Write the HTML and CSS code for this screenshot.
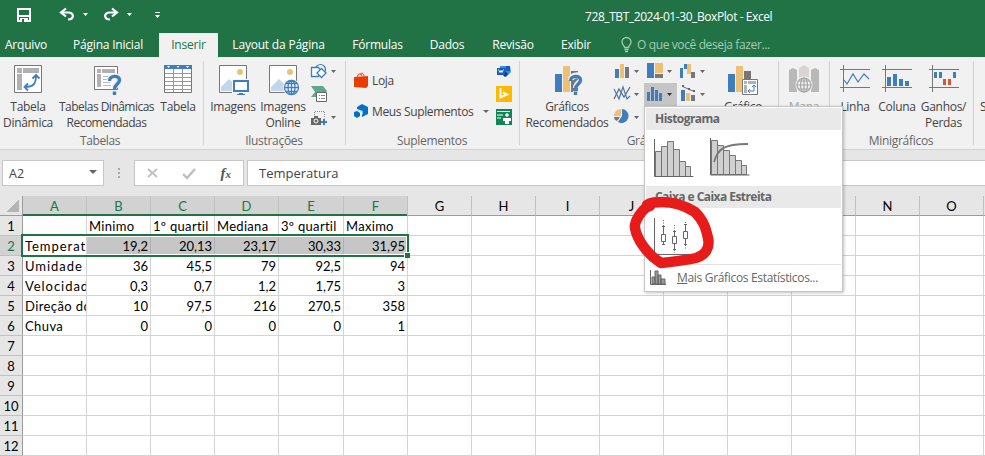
FILE: index.html
```html
<!DOCTYPE html>
<html lang="pt-BR">
<head>
<meta charset="utf-8">
<title>728_TBT_2024-01-30_BoxPlot - Excel</title>
<link rel="stylesheet" href="styles.css">
</head>
<body>
<div class="app">
  <header class="titlebar">
    <div class="quick">
      <svg width="170" height="33" fill="none">
        <path d="M18 9h12v12h-12z" stroke="#fff" stroke-width="2"/><path d="M18 15h12v2h-12zM20 18h8v4h-8z" fill="#fff"/><path d="M22 19h2v3h-2z" fill="#217346"/>
        <path d="M62 12.500h6c7 0 6 7 0 7M66 8.500l-5 4 5 4" stroke="#fff" stroke-width="2.200"/>
        <path d="M83 13h5l-2.500 3zM127 13h5l-2.500 3zM155 15h5l-2.500 3zM155 12h5v1h-5z" fill="#fff"/>
        <path d="M116 12.500h-6c-7 0-6 7 0 7M112 8.500l5 4-5 4" stroke="#fff" stroke-width="2.200"/>
      </svg>
    </div>
    <div class="doc">728_TBT_2024-01-30_BoxPlot - Excel</div>
  </header>
  <nav class="tabs">
    <span class="tab t0">Arquivo</span><span class="tab t1">Página Inicial</span><span class="tab t2 active">Inserir</span><span class="tab t3">Layout da Página</span><span class="tab t4">Fórmulas</span><span class="tab t5">Dados</span><span class="tab t6">Revisão</span><span class="tab t7">Exibir</span>
    <span class="tell"><svg width="12" height="16" fill="none" stroke="#a3cbb3" stroke-width="1.300"><path d="M3.500 10.500c0-2-2.500-2.500-2.500-5.500a4.500 4.500 0 0 1 9 0c0 3-2.500 3.500-2.500 5.500zM3.500 12.500h4M4 14.500h3"/></svg>O que você deseja fazer...</span>
  </nav>

  <section class="ribbon">
    <div class="group g-tables">
      <div class="tools">
        <div class="big w56">
          <svg class="ic" width="28" height="28" fill="none"><path d="M.5.5h27v27h-27z" fill="#fff" stroke="#777"/><path d="M3 3h5v5h-5zM9 3h16v5h-16zM3 9h5v16h-5z" fill="#b1b1b1"/><path d="M11 22c8 0 11-3 11-11M18.500 13.500l3.500-3.500 3.500 3.500M14 18.500l-3.500 3.500 3.500 3.500" stroke="#3f7dbd" stroke-width="1.800"/></svg>
          <span>Tabela<br>Dinâmica</span></div>
        <div class="big w101">
          <svg class="ic" width="26" height="28" fill="none"><path d="M.5 1.500h23v23h-23z" fill="#fff" stroke="#777"/><path d="M3 4h4v4h-4zM8 4h13v4h-13zM3 9h4v13h-4z" fill="#b1b1b1"/><path d="M9 11.500h10M9 14.500h10M9 17.500h7M9 20.500h8" stroke="#bbb"/><path d="M15.500 15c1-5 10-5 10 0 0 4-5 3-5 8" stroke="#f0f0f0" stroke-width="6"/><path d="M15.500 16c0-6 10-6 10-1 0 4-5 4-5 9M20.500 26.500v3.500" stroke="#3f7dbd" stroke-width="3.400"/></svg>
          <span class="tight">Tabelas Dinâmicas<br>Recomendadas</span></div>
        <div class="big w42">
          <svg class="ic" width="28" height="28"><path d="M.5.5h27v27h-27z" fill="#fff" stroke="#777"/><path d="M0 0h28v4h-28z" fill="#3f7dbd"/><path d="M3 1h3l-1.500 2zM12.500 1h3l-1.500 2zM22 1h3l-1.500 2z" fill="#fff"/><path d="M1 8.500h26M1 12.500h26M1 16.500h26M1 20.500h26M1 24.500h26M9.500 4v23M18.500 4v23" stroke="#999"/></svg>
          <span>Tabela</span></div>
      </div>
      <div class="glabel">Tabelas</div>
    </div>

    <div class="group g-illus">
      <div class="tools">
        <div class="big w50 imgs">
          <svg class="ic" width="28" height="28"><path d="M.5.500h27v27h-27z" fill="#fff" stroke="#777"/><circle cx="21" cy="7" r="3" fill="#ecc177"/><path d="M2 26v-4l8-8 7 7v5z" fill="#c3d5ea"/><path d="M13 14h18v14h-18z" fill="#f5f5f5"/><path d="M15 16h14v10h-14z" fill="#fff" stroke="#3f7dbd" stroke-width="2"/><path d="M20 28h4v1h2v1h-8v-1h2z" fill="#3f7dbd"/></svg>
          <span>Imagens</span></div>
        <div class="big w50 imgs">
          <svg class="ic" width="28" height="28" fill="none"><path d="M.5.5h27v27h-27z" fill="#fff" stroke="#777"/><circle cx="21" cy="7" r="3" fill="#ecc177"/><path d="M2 26v-4l8-8 7 7v5z" fill="#c3d5ea"/><circle cx="22.500" cy="22.500" r="8.500" fill="#f5f5f5"/><g stroke="#3f7dbd" stroke-width="1.300"><circle cx="22.500" cy="22.500" r="7" fill="#fff"/><ellipse cx="22.500" cy="22.500" rx="3.500" ry="7"/><path d="M22.500 15v15M15.500 22.500h14M17 18.500h11M17 26.500h11"/></g></svg>
          <span>Imagens<br>Online</span></div>
        <svg class="stack" width="28" height="64" fill="none"><circle cx="9.500" cy="4.500" r="5" stroke="#3f7dbd" stroke-width="1.200"/><path d="M.5 2.500h7l2.500 4-2.500 5h-7z" fill="#fff" stroke="#3f7dbd" stroke-width="1.300"/><path d="M10.500 3.500l4.500 4.500-4.500 4.500-4.500-4.500z" fill="#fff" stroke="#3f7dbd" stroke-width="1.300"/>
          <path d="M0 21h12l4 5-2 2h-9v4h-5l4-5z" fill="#5fa78a"/><path d="M5.500 27.500h10v9h-10z" fill="#fff" stroke="#666"/><path d="M8 30.500h1M8 33.500h1M10 30.500h4M10 33.500h4" stroke="#888"/>
          <path d="M3.500 52v-5.500h10v7" stroke="#888" stroke-dasharray="1 1"/><path d="M0 53h3v-2h4v2h3v7h-10z" fill="#666"/><circle cx="5" cy="56" r="2" stroke="#fff"/><path d="M13 54v6M10 57h6" stroke="#3f7dbd" stroke-width="2"/><path d="M20 5h5l-2.500 3zM20 51h5l-2.500 3z" fill="#666"/></svg>
      </div>
      <div class="glabel">Ilustrações</div>
    </div>

    <div class="group g-addins">
      <div class="tools">
        <div class="addlist">
          <div class="add"><svg width="14" height="16" fill="none"><path d="M0 5l14-1v10l-2 2-12-1z" fill="#eb3c00"/><path d="M3.500 5c0-4 4-4 4.500-1M6 3c1-3 4-2 4 1" stroke="#eb3c00"/></svg><span>Loja</span></div>
          <div class="add"><svg width="14" height="14"><path d="M3 3l5-3 6 3v7l-6 3v-5l-5-2z" fill="#0072c6"/><path d="M3 5.500l5 2v3" fill="none" stroke="#f1f1f1" stroke-width="1.200"/><path d="M0 8l3-1 3 2v3l-3 2-3-2z" fill="#0072c6"/></svg><span class="meus">Meus Suplementos</span><i class="caret"></i></div>
        </div>
        <svg class="apps" width="16" height="64" fill="none"><path d="M4 1h10l1 6-5 5-6-4z" fill="#3293dd"/><path d="M10 1h4v5h-5z" fill="#185abd"/><path d="M5 8l4-2 3 3-3 3z" fill="#16377f"/><path d="M1 3h8v7h-8z" fill="#185abd"/><path d="M2.500 4.500l1.500 3 1-2 1 2 1.500-3" stroke="#fff"/><path d="M0 21h16v16h-16z" fill="#ffb900"/><path d="M4.500 23v9.500l6.500-3-4-2" stroke="#fff" stroke-width="2"/><path d="M0 44h16v16h-16z" fill="#128455"/><path d="M1 46.500h13M1 50h6M1 53h4" stroke="#fff" stroke-width="1.200"/><circle cx="11" cy="50" r="1.800" fill="#fff"/><path d="M7 53h8v3h-2v3h-4v-3h-2z" fill="#fff"/></svg>
      </div>
      <div class="glabel">Suplementos</div>
    </div>

    <div class="group g-charts">
      <div class="tools">
        <div class="big w94">
          <svg class="ic" width="28" height="28" fill="none"><path d="M2 9h7v18h-7z" fill="#3f7dbd"/><path d="M10 1h7v26h-7z" fill="#ecc177"/><path d="M18 6h7v21h-7z" fill="#777"/><path d="M18 15c0-6 10-6 10-1 0 4-5 4-5 9M23 26v4" stroke="#f0f0f0" stroke-width="6"/><path d="M17.500 16c0-6 10-6 10-1 0 4-5 4-5 9M22.500 26.500v3.500" stroke="#3f7dbd" stroke-width="3.400"/></svg>
          <span>Gráficos<br>Recomendados</span></div>
        <svg class="chartgrid" width="96" height="64" fill="none">
          <path d="M30 18h33v24h-33z" fill="#c5c5c5"/>
          <path d="M1 4h4v9h-4zM33 -2h7v15h-7zM66 3h3v10h-3zM70 -1h3v5h-3z" fill="#3f7dbd"/><path d="M6-1h4v14h-4zM41-2h8v10h-8zM73-1h4v10h-4z" fill="#ecc177"/><path d="M11 2h4v11h-4zM41 9h8v4h-8zM77 7h4v6h-4z" fill="#777"/>
          <path d="M0 34l5-10 5 8 6-10" stroke="#666" stroke-width="1.200"/><path d="M0 24l5 10 4-12 4 12 3-3" stroke="#3f7dbd" stroke-width="1.200"/>
          <path d="M33 27h3v9h-3zM37 22h3v14h-3zM41 25h3v11h-3zM45 28h3v8h-3zM67 25h4v11h-4z" fill="#3f7dbd"/><path d="M72 28h4v8h-4z" fill="#ecc177"/><path d="M77 30h4v6h-4z" fill="#777"/><path d="M69 21.500l6 3 6 2" stroke="#666"/><path d="M68 20h2v2h-2zM74 23h2v2h-2zM79 25h2v2h-2z" fill="#666"/>
          <path d="M8 44a7 7 0 1 1-4 13l4-6z" fill="#3f7dbd"/><path d="M7 44v7h-7c0-4 3-7 7-7z" fill="#ecc177"/><path d="M0 52h6l-3 4c-2-1-3-2-3-4z" fill="#777"/>
          <path d="M20 5h5l-2.500 3zM53 5h5l-2.500 3zM86 5h5l-2.500 3zM20 28h5l-2.500 3zM86 28h5l-2.500 3zM20 51h5l-2.500 3z" fill="#666"/><path d="M53 28h5l-2.500 3z" fill="#333"/>
        </svg>
        <div class="big w58 pivot">
          <svg class="ic" width="30" height="28" fill="none"><path d="M0 9h7v18h-7z" fill="#3f7dbd"/><path d="M8 1h7v26h-7z" fill="#ecc177"/><path d="M16 6h7v8h-7z" fill="#777"/><path d="M14.500 14.500h15v15h-15z" fill="#fff" stroke="#777"/><path d="M16 16h3v3h-3zM20 16h8v3h-8zM16 20h3v8h-3z" fill="#b1b1b1"/><path d="M21 26h5v-5M24 22l2-2 2 2M22 24l-2 2 2 2" stroke="#3f7dbd"/></svg>
          <span>Gráfico</span></div>
      </div>
      <div class="glabel">Gráficos</div>
    </div>

    <div class="group g-map">
      <div class="tools"><div class="big w50 off">
        <svg class="ic" width="30" height="28" fill="none"><path d="M0 27v-22l4-2 4 2v22zM22 27v-22l4-2 4 2v22z" fill="#b8b8b8"/><path d="M10 27v-24l5-3 5 3v24z" fill="#d8d4d4"/><circle cx="15" cy="20" r="8.500" fill="#f0f0f0"/><g stroke="#a5a5a5" stroke-width="1.200"><circle cx="15" cy="20" r="7"/><ellipse cx="15" cy="20" rx="3.500" ry="7"/><path d="M15 13v14M8 20h14M10 16h10M10 24h10"/></g></svg>
        <span>Mapa</span></div></div>
    </div>

    <div class="group g-spark">
      <div class="tools">
        <div class="big w42"><svg class="ic" width="30" height="28" fill="none"><path d="M0 4.500h30M0 22.500h30M3.500 0v27" stroke="#777"/><path d="M4 15l3 4 6-10 5 8 6-8 5 5" stroke="#3f7dbd" stroke-width="1.200"/></svg><span>Linha</span></div>
        <div class="big w42"><svg class="ic" width="30" height="28"><path d="M0 4.500h30M0 22.500h30M3.500 0v27" stroke="#777"/><path d="M5 12h4v9h-4zM11 9h4v12h-4zM17 14h4v7h-4zM23 16h4v5h-4z" fill="#3f7dbd"/></svg><span>Coluna</span></div>
        <div class="big w51"><svg class="ic" width="30" height="28"><path d="M0 4.500h30M0 22.500h30M3.500 0v27" stroke="#777"/><path d="M5 7h3v6h-3zM10 7h3v6h-3zM24 7h3v6h-3z" fill="#3f7dbd"/><path d="M14 14h3v6h-3zM19 14h3v6h-3z" fill="#d65532"/></svg><span>Ganhos/<br>Perdas</span></div>
      </div>
      <div class="glabel">Minigráficos</div>
    </div>
    <div class="next"><span>S</span></div>
  </section>

  <section class="formula">
    <div class="namebox">A2<i class="caret"></i></div>
    <svg class="dots" width="4" height="12" fill="#aaa"><path d="M1 1h2v2h-2zM1 5h2v2h-2zM1 9h2v2h-2z"/></svg>
    <div class="fxbox"><svg width="50" height="24" fill="none"><path d="M13 8l9 8M22 8l-9 8" stroke="#bebebe" stroke-width="1.700"/><path d="M48 13l4 4 8-9" stroke="#bebebe" stroke-width="2.400"/></svg><span class="fx">f<small>x</small></span></div>
    <div class="value">Temperatura</div>
  </section>

  <main class="sheet" id="sheet"></main>

  <div class="selection"></div><div class="handle"></div>

  <aside class="menu">
    <h2>Histograma</h2>
    <div class="opts o1">
      <svg width="41" height="40"><g fill="#d0d0d0" stroke="#777"><path d="M1.500 12.500h6v25h-6zM7.500 7.500h6v30h-6zM13.500 2.500h6v35h-6zM19.500 10.500h6v27h-6zM25.500 22.500h6v15h-6zM31.500 27.500h5v10h-5z"/></g><path d="M.5 0v37.500h39" stroke="#666" fill="none"/></svg>
      <svg width="41" height="40"><g fill="#d0d0d0" stroke="#777"><path d="M1.500 1.500h6v34h-6zM7.500 6.500h6v29h-6zM13.500 11.500h6v24h-6zM19.500 16.500h6v19h-6zM25.500 21.500h6v14h-6zM31.500 26.500h5v9h-5z"/></g><path d="M.5-1v37h39" stroke="#666" fill="none"/><path d="M4 23c4-13 9-18 34-18" fill="none" stroke="#777" stroke-width="1.800"/></svg>
    </div>
    <h2>Caixa e Caixa Estreita</h2>
    <div class="opts o2">
      <svg width="41" height="40" fill="none" stroke="#666"><path d="M.5 1v36.500h39"/><path d="M9.500 3v6M20.500 8v6M31.500 5v3M31.500 28v5M20.500 33v3" stroke-dasharray="1 1.500"/><path d="M8 9.500h3M9.500 9v8M7.500 17.500h4v7h-4zM9.500 25v3M8 27.500h3M19 14.500h3M20.500 14v5M18.500 19.500h4v7h-4zM20.500 27v6M19 32.500h3M30 7.500h3M31.500 8v6M29.500 14.500h4v7h-4zM31.500 22v6M30 27.500h3"/></svg>
    </div>
    <div class="more"><svg width="16" height="17"><path d="M.5 1v14.500h15.500" stroke="#666" fill="none"/><path d="M2 8h3v7h-3zM5 2h3v13h-3zM8 6h3v9h-3zM11 10h4v5h-4z" fill="#999" stroke="#666"/></svg><span><u>M</u>ais Gráficos Estatísticos...</span></div>
  </aside>
  <svg class="mark" width="90" height="80" fill="none"><path d="M20 10C12 12 4 26 5 32C7 44 18 59 31 67C42 66 57 64 66 62C76 59 80 51 78 42C76 33 74 25 65 16C54 9 44 6 32 6C26 6 21 6 17 9" stroke="#e81b1b" stroke-width="10.500" stroke-linecap="round" stroke-linejoin="round"/></svg>
</div>
<script src="sheet.js"></script>
</body>
</html>
```
FILE: styles.css
```css
* { box-sizing: border-box; }
body { margin: 0; overflow: hidden; font-family: "Open Sans", "Noto Sans", sans-serif; font-size: 12px; color: #444; }
svg { display: block; flex: none; overflow: visible; }
.app { position: relative; width: 985px; height: 456px; overflow: hidden; background: #fff; }
.titlebar { height: 33px; background: #217346; display: flex; }
.quick { width: 585px; }
.doc { color: #fff; line-height: 33px; letter-spacing: -.42px; white-space: nowrap; }
.tabs { height: 24px; background: #217346; color: #fff; display: flex; line-height: 24px; white-space: nowrap; letter-spacing: -.2px; }
.tab { text-align: center; flex: none; }
.t0 { width: 52px; } .t1 { width: 112px; margin-right: -5px; } .t2 { width: 59px; } .t3 { width: 121px; }
.t4 { width: 77px; } .t5 { width: 62px; } .t6 { width: 70px; } .t7 { width: 56px; }
.active { background: #f1f1f1; color: #217346; }
.tell { display: flex; align-items: center; gap: 4px; padding-left: 17px; color: #a3cbb3; letter-spacing: -.38px; }
.ribbon { height: 93px; background: #f1f1f1; border-bottom: 1px solid #d2d2d2; display: flex; }
.group { flex: none; height: 88px; display: flex; flex-direction: column; justify-content: space-between; position: relative; }
.group::after { content: ""; width: 1px; position: absolute; right: 0; top: 4px; bottom: 0; background: #d2d2d2; }
.g-tables { width: 204px; } .g-illus { width: 142px; } .g-addins { width: 174px; } .g-charts { width: 259px; } .g-map { width: 51px; } .g-spark { width: 144px; }
.tools { display: flex; padding-top: 8px; height: 75px; }
.big { flex: none; display: flex; flex-direction: column; align-items: center; text-align: center; line-height: 16px; white-space: nowrap; letter-spacing: -.3px; }
.big span { margin-top: 6px; }
.big .tight { letter-spacing: -.52px; }
.w42 { width: 42px; } .w50 { width: 50px; } .w51 { width: 51px; } .w56 { width: 56px; } .w58 { width: 58px; } .w94 { width: 94px; } .w101 { width: 101px; }
.glabel { text-align: center; color: #666; line-height: 16px; height: 12px; letter-spacing: -.3px; padding-right: 2px; }
.g-tables .glabel { padding-right: 4px; letter-spacing: -.4px; }
.g-illus .tools { padding-left: 4px; }
.stack { margin-left: 3px; }
.addlist { width: 150px; padding: 7px 0 0 8px; display: flex; flex-direction: column; gap: 15px; }
.add { display: flex; align-items: center; gap: 4px; height: 16px; white-space: nowrap; letter-spacing: -.36px; }
.caret { border: 3px solid transparent; border-top-color: #666; border-bottom: 0; }
.meus { width: 105px; }
.meus + .caret { margin-left: 2px; }
.pivot { margin-left: 4px; }
.off { color: #a5a5a5; }
.next { padding: 42px 0 0 6px; line-height: 16px; }
.g-spark .tools { padding-left: 4px; }
.formula { height: 46px; background: #e6e6e6; display: flex; align-items: flex-start; padding: 10px 0 0 2px; }
.namebox, .fxbox, .value { height: 26px; border: 1px solid #c6c6c6; background: #fff; display: flex; align-items: center; }
.namebox { width: 102px; padding: 0 6px; justify-content: space-between; font-size: 12.5px; }
.namebox .caret { border-width: 4px 4px 0; margin-bottom: 2px; }
.dots { margin: 7px 13px 0 13px; }
.fxbox { width: 110px; justify-content: space-between; padding-right: 12px; }
.fx { font: italic bold 15px "Liberation Serif", serif; color: #555; }
.fx small { font-size: 11px; }
.value { flex: 1; margin-left: 3px; border-right: 0; padding-left: 11px; font-size: 13px; }
.sheet { display: grid; grid-template-columns: 23px 64px 64px 64px 64px 65px repeat(11, 64px); grid-auto-rows: 20px; font: 13px/20px Lato, sans-serif; color: #000; }
.sheet > div { border-right: 1px solid #d4d4d4; border-bottom: 1px solid #d4d4d4; overflow: hidden; white-space: nowrap; padding: 0 0 0 2px; letter-spacing: .3px; }
.sheet > .head { background: #e6e6e6; border-right-color: #c0c0c0; border-bottom-color: #9b9b9b; text-align: center; padding: 0; letter-spacing: 0; }
.sheet > .rowhead { border-right-color: #9b9b9b; border-bottom-color: #c0c0c0; }
.sheet > .on { background: #d2d2d2; color: #217346; }
.sheet > .fill { background: #c6c6c6; border-right-color: #b0b0b0; }
.sheet > .num { text-align: right; padding-right: 2px; letter-spacing: 0; }
.sheet > .label { letter-spacing: .4px; }
.sheet > .wide { letter-spacing: .95px; }
.sheet > .corner { background: linear-gradient(135deg, transparent 50%, #b4b4b4 50%) 7px 4px / 12px 12px no-repeat #e6e6e6; border-right-color: #9b9b9b; }
.selection { position: absolute; left: 21px; top: 234px; width: 388px; height: 23px; border: 2px solid #217346; box-shadow: inset 0 0 0 1px #fff; }
.selection::before { content: ""; position: absolute; left: 0; right: 0; top: -22px; height: 2px; background: #217346; }
.handle { position: absolute; left: 404px; top: 252px; width: 6px; height: 6px; background: #217346; border: 1px solid #fff; border-width: 1px 0 0 1px; }
.menu { position: absolute; left: 644px; top: 106px; width: 199px; height: 186px; background: #fff; border: 1px solid #c6c6c6; padding: 1px; box-shadow: 1px 1px 3px rgba(0,0,0,.25); color: #666; }
.menu h2 { margin: 0; height: 22px; padding-left: 9px; background: #e9e9e9; font-size: 12px; line-height: 21px; font-weight: 700; letter-spacing: -.55px; }
.opts { display: flex; gap: 15px; padding-left: 8px; }
.o1 { height: 56px; padding-top: 9px; }
.o2 { height: 56px; padding-top: 9px; }
.more { display: flex; align-items: center; gap: 11px; height: 27px; padding-left: 4px; letter-spacing: -.32px; white-space: nowrap; position: relative; }
.more::before { content: ""; position: absolute; left: 28px; right: 0; top: 0; height: 1px; background: #e0e0e0; }
.mark { position: absolute; left: 630px; top: 196px; }
```
FILE: sheet.js
```js
const rows = [
  ["", "Minimo", "1º quartil", "Mediana", "3º quartil", "Maximo"],
  ["Temperatura", "19,2", "20,13", "23,17", "30,33", "31,95"],
  ["Umidade", "36", "45,5", "79", "92,5", "94"],
  ["Velocidade", "0,3", "0,7", "1,2", "1,75", "3"],
  ["Direção do vento", "10", "97,5", "216", "270,5", "358"],
  ["Chuva", "0", "0", "0", "0", "1"]
];
const letters = "ABCDEFGHIJKLMNOP";
const sheet = document.getElementById("sheet");
function add(cls, text) {
  const d = document.createElement("div");
  d.className = cls;
  d.textContent = text;
  sheet.append(d);
}
add("head corner", "");
for (let c = 0; c < 16; c++) add("head" + (c < 6 ? " on" : ""), letters[c]);
for (let r = 0; r < 12; r++) {
  add("head rowhead" + (r === 1 ? " on" : ""), r + 1);
  for (let c = 0; c < 16; c++) {
    const t = (rows[r] || [])[c] || "";
    const kind = r > 0 && c > 0 ? "num" : c > 0 ? "txt" : r < 4 ? "label wide" : "label";
    add(kind + (r === 1 && c > 0 && c < 6 ? " fill" : ""), t);
  }
}
```
